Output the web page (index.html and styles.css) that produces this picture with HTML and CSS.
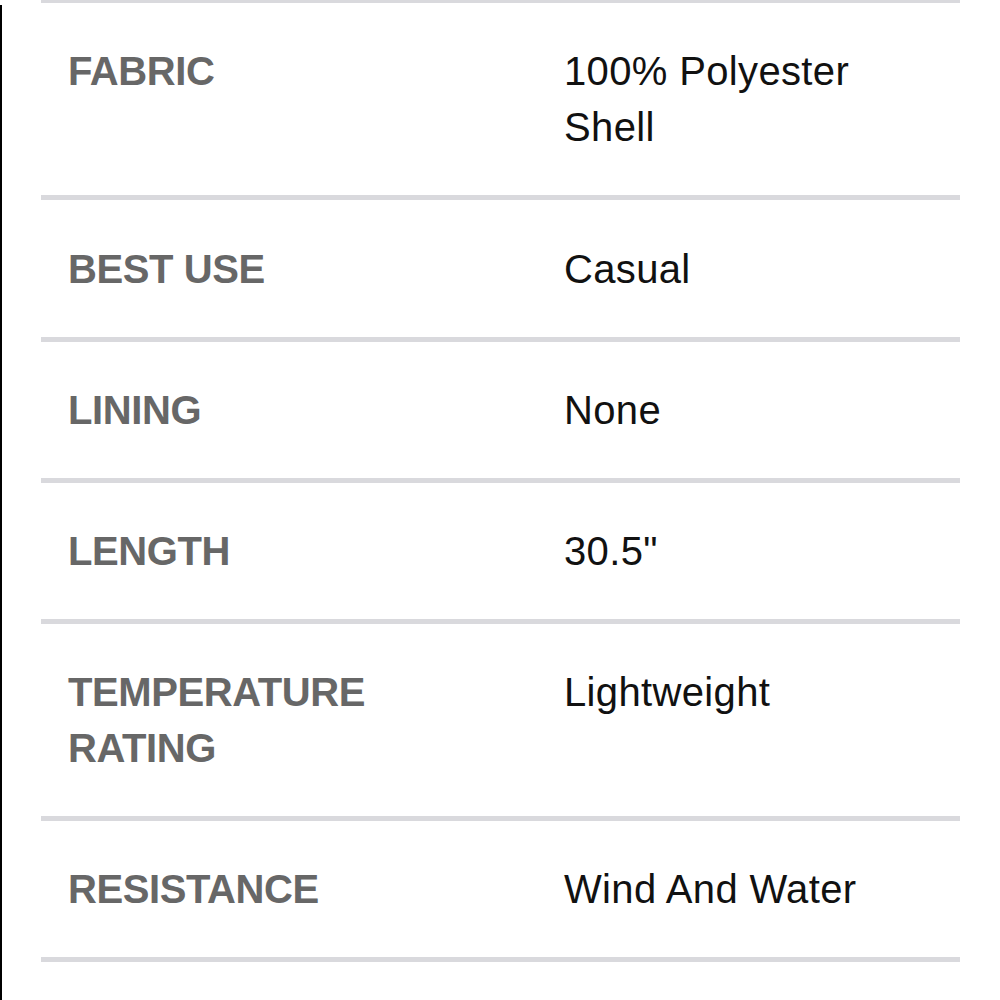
FILE: index.html
```html
<!DOCTYPE html>
<html lang="en">
<head>
<meta charset="utf-8">
<title>Specifications</title>
<link rel="stylesheet" href="styles.css">
</head>
<body>
<div class="frame">
  <div class="edge"></div>
  <div class="specs">
    <div class="row"><div class="label">FABRIC</div><div class="value">100% Polyester Shell</div></div>
    <div class="row"><div class="label">BEST USE</div><div class="value">Casual</div></div>
    <div class="row"><div class="label">LINING</div><div class="value">None</div></div>
    <div class="row"><div class="label">LENGTH</div><div class="value">30.5"</div></div>
    <div class="row"><div class="label">TEMPERATURE RATING</div><div class="value">Lightweight</div></div>
    <div class="row"><div class="label">RESISTANCE</div><div class="value">Wind And Water</div></div>
  </div>
</div>
</body>
</html>
```
FILE: styles.css
```css
html, body {
  margin: 0;
  padding: 0;
  background: #ffffff;
}
body {
  font-family: "Liberation Sans", Arial, Helvetica, sans-serif;
}
.frame {
  display: flex;
  align-items: stretch;
  min-height: 1000px;
  overflow: hidden;
}
.edge {
  width: 2px;
  background: #000000;
  margin-top: 5px;
  flex: none;
}
.specs {
  margin-left: 39px;
  margin-top: -2px;
  width: 919px;
  border-top: 5px solid #d9d9dd;
  align-self: flex-start;
}
.row {
  display: grid;
  grid-template-columns: 420px 320px;
  column-gap: 76px;
  padding: 40px 0 40px 27px;
  border-bottom: 5px solid #d9d9dd;
  font-size: 40px;
  line-height: 56px;
}
.row:nth-child(2) {
  padding-top: 41px;
}
.label {
  font-weight: bold;
  color: #676767;
  letter-spacing: -0.4px;
}
.value {
  color: #111111;
  letter-spacing: 0.35px;
}
```
